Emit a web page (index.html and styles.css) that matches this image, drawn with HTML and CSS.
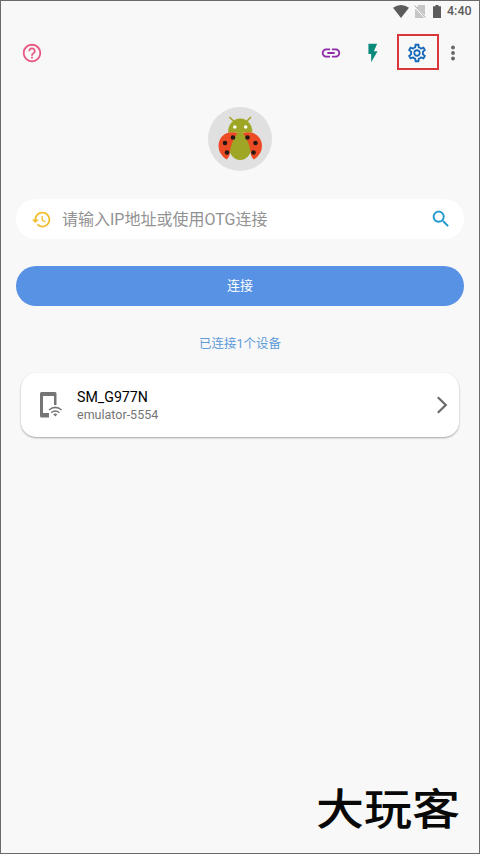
FILE: index.html
```html
<!DOCTYPE html>
<html lang="zh-CN">
<head>
<meta charset="utf-8">
<title>设备连接</title>
<link rel="stylesheet" href="styles.css">
</head>
<body>
<div class="screen">
  <div class="status">
    <svg class="st-wifi" viewBox="0 0 16 13"><path d="M0 2.800Q8-2.600 16 2.800L8 13z"/></svg>
    <svg class="st-sim" viewBox="0 0 12 13"><path d="M4.500 0H11v13H1V4z" fill="#c6c6c6"/><path d="M0 1l11.500 11.500" stroke="#f8f8f8" stroke-width="2.200"/><path d="M.5 .5l11 12" stroke="#aaa" stroke-width="1"/></svg>
    <svg class="st-bat" viewBox="0 0 8 13"><path d="M2.500 0h3v1.300H8V13H0V1.300h2.500z"/></svg>
    <span class="time">4:40</span>
  </div>
  <header class="toolbar">
    <svg class="icon help" viewBox="0 0 24 24"><path d="M11 18h2v-2h-2v2zm1-16C6.480 2 2 6.480 2 12s4.480 10 10 10 10-4.480 10-10S17.520 2 12 2zm0 18c-4.410 0-8-3.590-8-8s3.590-8 8-8 8 3.590 8 8-3.590 8-8 8zm0-14c-2.210 0-4 1.790-4 4h2c0-1.100.9-2 2-2s2 .9 2 2c0 2-3 1.750-3 5h2c0-2.250 3-2.500 3-5 0-2.210-1.790-4-4-4z"/></svg>
    <svg class="icon link" viewBox="0 0 24 24"><path d="M3.900 12c0-1.710 1.390-3.100 3.100-3.100h4V7H7c-2.760 0-5 2.240-5 5s2.240 5 5 5h4v-1.900H7c-1.710 0-3.100-1.390-3.100-3.100zM8 13h8v-2H8v2zm9-6h-4v1.900h4c1.710 0 3.100 1.390 3.100 3.100s-1.390 3.100-3.100 3.100h-4V17h4c2.760 0 5-2.240 5-5s-2.240-5-5-5z"/></svg>
    <svg class="icon flash" viewBox="0 0 24 24"><path d="M7 2v11h3v9l7-12h-4l3.500-8z"/></svg>
    <span class="marked"><svg class="icon gear" viewBox="0 0 24 24"><path d="M19.430 12.980c.04-.32.07-.64.07-.98s-.03-.66-.07-.98l2.110-1.650c.19-.15.24-.42.12-.64l-2-3.460c-.09-.16-.26-.25-.44-.25-.06 0-.12.01-.17.03l-2.490 1c-.52-.4-1.080-.73-1.690-.98l-.38-2.650C14.460 2.180 14.250 2 14 2h-4c-.25 0-.46.18-.49.42l-.38 2.650c-.61.25-1.170.59-1.690.98l-2.490-1c-.06-.02-.12-.03-.18-.03-.17 0-.34.09-.43.25l-2 3.460c-.13.22-.07.49.12.64l2.110 1.650c-.04.32-.07.65-.07.98s.03.66.07.98l-2.110 1.650c-.19.15-.24.42-.12.64l2 3.460c.09.16.26.25.44.25.06 0 .12-.01.17-.03l2.490-1c.52.4 1.080.73 1.690.98l.38 2.650c.03.24.24.42.49.42h4c.25 0 .46-.18.49-.42l.38-2.650c.61-.25 1.170-.59 1.690-.98l2.490 1c.06.02.12.03.18.03.17 0 .34-.09.43-.25l2-3.460c.12-.22.07-.49-.12-.64l-2.110-1.650zm-1.980-1.710c.04.31.05.52.05.73 0 .21-.02.43-.05.73l-.14 1.130.89.7 1.080.84-.7 1.210-1.270-.51-1.040-.42-.9.68c-.43.32-.84.56-1.250.73l-1.060.43-.16 1.130-.2 1.350h-1.400l-.19-1.350-.16-1.130-1.060-.43c-.43-.18-.83-.41-1.230-.71l-.91-.7-1.060.43-1.270.51-.7-1.210 1.080-.84.89-.7-.14-1.130c-.03-.31-.05-.54-.05-.74s.02-.43.05-.73l.14-1.130-.89-.7-1.080-.84.7-1.210 1.270.51 1.040.42.9-.68c.43-.32.84-.56 1.250-.73l1.060-.43.16-1.130.2-1.350h1.390l.19 1.350.16 1.130 1.060.43c.43.18.83.41 1.230.71l.91.7 1.060-.43 1.270-.51.7 1.210-1.070.85-.89.7.14 1.130zM12 8c-2.210 0-4 1.790-4 4s1.790 4 4 4 4-1.790 4-4-1.790-4-4-4zm0 6c-1.100 0-2-.9-2-2s.9-2 2-2 2 .9 2 2-.9 2-2 2z"/></svg></span>
    <svg class="more" viewBox="0 0 6 18"><circle cx="3" cy="3.500" r="1.900"/><circle cx="3" cy="9" r="1.900"/><circle cx="3" cy="14.500" r="1.900"/></svg>
  </header>
  <svg class="avatar" viewBox="0 0 64 64">
    <circle cx="32" cy="32" r="32" fill="#e0e0e0"/>
    <g fill="#9fa625"><path d="M22 10.500l4 4M42.500 10.500l-4 4" stroke="#9fa625" stroke-width="1.700" stroke-linecap="round"/><path d="M20 25.500a12.200 14 0 0 1 24.400 0z"/><ellipse cx="32.200" cy="39" rx="11.500" ry="14"/></g>
    <g fill="#ec4b23"><path d="M29.500 26C18 23 10.500 30 10.500 39q0 8 8 13.500Q22 50 22 44Q23 36 29.500 26z"/><path d="M35 26C46.500 23 54 30 54 39q0 8-8 13.500Q42.500 50 42.500 44Q41.500 36 35 26z"/></g>
    <g fill="#fff"><circle cx="26.800" cy="20" r="1.800"/><circle cx="37.700" cy="20" r="1.800"/></g>
    <g fill="#241713"><circle cx="25" cy="30.500" r="2.300"/><circle cx="17" cy="36" r="2.300"/><circle cx="19" cy="45.500" r="2.300"/><circle cx="39.500" cy="30.500" r="2.300"/><circle cx="47.500" cy="36" r="2.300"/><circle cx="45.500" cy="45.500" r="2.300"/></g>
  </svg>
  <div class="search">
    <svg class="history" viewBox="0 0 24 24"><path d="M13 3c-4.970 0-9 4.030-9 9H1l3.890 3.890.07.14L9 12H6c0-3.870 3.130-7 7-7s7 3.130 7 7-3.130 7-7 7c-1.930 0-3.680-.79-4.940-2.060l-1.420 1.420C8.270 19.990 10.510 21 13 21c4.970 0 9-4.030 9-9s-4.030-9-9-9zm-1 5v5l4.280 2.540.72-1.210-3.500-2.080V8H12z"/></svg>
    <span class="hint">请输入IP地址或使用OTG连接</span>
    <svg class="find" viewBox="0 0 24 24"><path d="M15.500 14h-.79l-.28-.27C15.410 12.590 16 11.110 16 9.500 16 5.910 13.090 3 9.500 3S3 5.910 3 9.500 5.910 16 9.500 16c1.610 0 3.090-.59 4.230-1.570l.27.28v.79l5 4.990L20.490 19l-4.990-5zm-6 0C7.010 14 5 11.990 5 9.500S7.010 5 9.500 5 14 7.010 14 9.500 11.990 14 9.500 14z"/></svg>
  </div>
  <div class="connect">连接</div>
  <div class="count">已连接1个设备</div>
  <div class="card">
    <svg class="device" viewBox="0 0 24 28"><path d="M2.500 1h13.500Q17.500 1 17.500 2.500V14h-2.500V5H4v17h6v4.500H2.500Q1 26.500 1 25V2.500Q1 1 2.500 1z" fill="#757575"/><path d="M10 19q6.300-5.200 12.600 0M12.300 21.600q4-3.200 8 0" fill="none" stroke="#757575" stroke-width="1.500"/><path d="M14.200 23.300q2.100-1.400 4.200 0l-2.100 2.200z" fill="#757575"/></svg>
    <div class="info"><div class="name">SM_G977N</div><div class="sub">emulator-5554</div></div>
    <svg class="chev" viewBox="0 0 12 18"><path d="M1.800 1.300L9.800 9l-8 7.700" fill="none" stroke="#6b6b6b" stroke-width="2.200"/></svg>
  </div>
  <div class="brand">大玩客</div>
</div>
</body>
</html>
```
FILE: styles.css
```css
* { box-sizing: border-box; }
body { margin: 0; font-family: Roboto, "Noto Sans CJK SC", sans-serif; }
svg { display: block; flex: none; fill: currentColor; }
.screen { position: relative; width: 480px; height: 854px; border: 1px solid #6b6b6b; background: #f8f8f8; display: flex; flex-direction: column; overflow: hidden; }
.status { height: 20px; padding-right: 7px; display: flex; align-items: center; justify-content: flex-end; color: #5c5c5c; }
.st-wifi { width: 16px; height: 13px; }
.st-sim { width: 12px; height: 13px; margin-left: 5px; }
.st-bat { width: 8px; height: 13px; margin-left: 7px; }
.time { width: 25px; margin-left: 6px; font-size: 12.500px; font-weight: 500; line-height: 20px; white-space: nowrap; }
.toolbar { height: 64px; display: flex; align-items: center; padding: 0 20px; }
.icon { width: 22px; height: 22px; }
.help { color: #e85a83; }
.link { color: #8e2aa6; margin-left: 277px; }
.flash { color: #0b8a7c; margin-left: 20px; }
.marked { width: 42px; height: 36px; margin: -2px 0 0 13px; border: 2px solid #d9363b; display: flex; align-items: center; justify-content: center; flex: none; }
.gear { color: #1768b8; margin: 2px 3px 0 0; }
.more { width: 6px; height: 18px; margin-left: 11px; color: #666; }
.avatar { width: 64px; height: 64px; margin: 22px auto 0; }
.search { height: 40px; margin: 28px 15px 0; border-radius: 20px; background: #fff; display: flex; align-items: center; padding: 0 12px 0 15px; }
.history { width: 21px; height: 21px; color: #f1bd2b; }
.hint { margin-left: 10px; padding-top: 2px; color: #929292; font-size: 16px; line-height: 24px; flex: 1; white-space: nowrap; }
.find { width: 22px; height: 22px; color: #1e98cf; }
.connect { height: 40px; margin: 27px 15px 0; border-radius: 20px; background: #5892e4; color: #fff; font-size: 13px; line-height: 39px; text-align: center; }
.count { margin-top: 27px; height: 20px; line-height: 21px; text-align: center; font-size: 12.500px; color: #5d9ad8; }
.card { height: 64px; margin: 20px 20px 0 20px; border-radius: 15px; background: #fff; box-shadow: 0 1px 2px rgba(0,0,0,.35); display: flex; align-items: center; padding: 0 11px 0 18px; }
.device { width: 24px; height: 28px; }
.info { flex: 1; margin-left: 14px; }
.name { font-size: 14.200px; line-height: 18px; color: #000; }
.sub { font-size: 12.500px; line-height: 17px; color: #757575; }
.chev { width: 12px; height: 18px; }
.brand { position: absolute; left: 315px; top: 777px; font-family: "Noto Sans CJK SC", sans-serif; font-size: 48px; font-weight: 500; line-height: 56px; color: #080808; white-space: nowrap; transform: scaleY(.9); }
```
